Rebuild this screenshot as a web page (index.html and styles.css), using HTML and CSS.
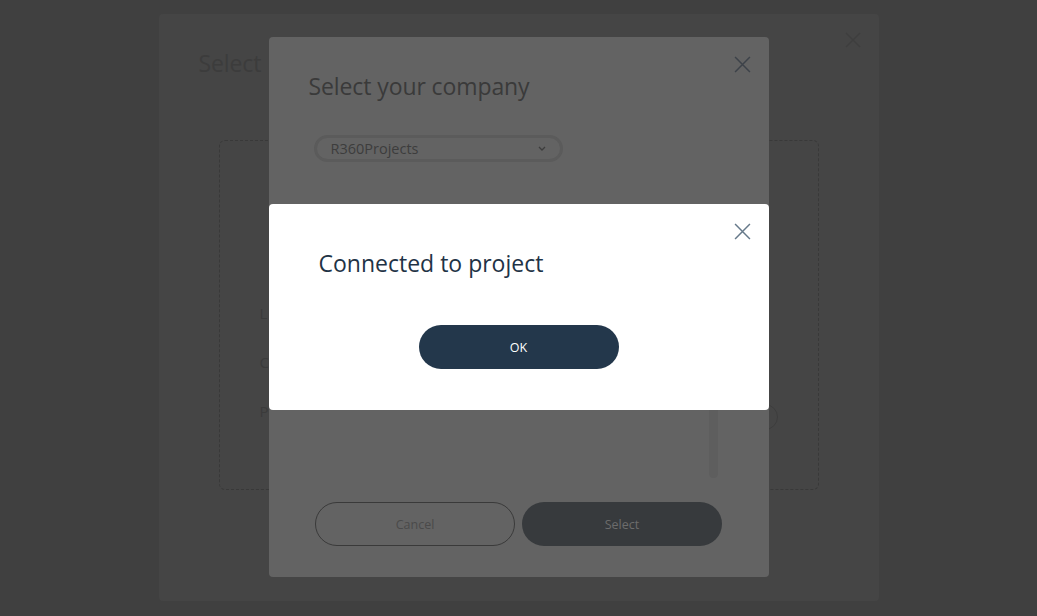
FILE: index.html
```html
<!DOCTYPE html>
<html lang="en">
<head>
  <meta charset="UTF-8" />
  <meta name="viewport" content="width=device-width, initial-scale=1.0"/>
  <title>Connected to project</title>
  <link rel="stylesheet" href="styles.css">
</head>
<body>

  <!-- first dialog, dimmed twice -->
  <div class="layer outer-layer">
    <div class="modal outer">
      <button class="close close-outer" aria-label="Close">
        <svg viewBox="0 0 16 16" width="16" height="16"><path d="M1 1L15 15M15 1L1 15"/></svg>
      </button>
      <h2 class="title">Select</h2>
      <div class="drop-box">
        <div class="rows">
          <p class="row">L</p>
          <p class="row">C</p>
          <p class="row">P</p>
        </div>
        <span class="ring"></span>
      </div>
    </div>
  </div>

  <!-- company dialog, dimmed once -->
  <div class="layer middle-layer">
    <div class="modal middle">
      <button class="close close-middle" aria-label="Close">
        <svg viewBox="0 0 16 16" width="17" height="17"><path d="M1 1L15 15M15 1L1 15"/></svg>
      </button>
      <h2 class="title">Select your company</h2>
      <div class="picker">
        <span>R360Projects</span>
        <svg class="chev" viewBox="0 0 8 5" width="8" height="5"><path d="M1 1L4 4L7 1"/></svg>
      </div>
      <div class="list">
        <div class="list-items"></div>
        <div class="track"></div>
      </div>
      <div class="actions">
        <button class="btn btn-outline">Cancel</button>
        <button class="btn btn-dark">Select</button>
      </div>
    </div>
  </div>

  <!-- confirmation -->
  <div class="layer alert-layer">
    <div class="modal alert">
      <button class="close close-alert" aria-label="Close">
        <svg viewBox="0 0 16 16" width="17" height="17"><path d="M1 1L15 15M15 1L1 15"/></svg>
      </button>
      <h2 class="alert-title">Connected to project</h2>
      <div class="alert-actions">
        <button class="btn btn-ok">OK</button>
      </div>
    </div>
  </div>

</body>
</html>
```

FILE: styles.css
```css
html, body {
  margin: 0;
  height: 100%;
}
body {
  background: #404040;
  font-family: "Open Sans", "Noto Sans", sans-serif;
  overflow: hidden;
}
.layer {
  position: fixed;
  inset: 0;
  display: flex;
  justify-content: center;
  align-items: flex-start;
}
.outer-layer {
  padding-top: 14px;
}
.middle-layer {
  padding-top: 37px;
}
.alert-layer {
  padding-top: 204px;
}
.modal {
  position: relative;
  box-sizing: border-box;
  border-radius: 4px;
}
.close {
  position: absolute;
  background: none;
  border: 0;
  padding: 0;
  line-height: 0;
}
.close svg path {
  fill: none;
  stroke-width: 1.4;
}
h2, p {
  margin: 0;
  font-weight: normal;
}
.title {
  font-size: 23px;
  line-height: 32px;
  letter-spacing: -0.1px;
}

/* outer */
.outer {
  width: 720px;
  height: 587px;
  background: #454545;
  padding: 33px 40px;
  color: #3c3c3c;
}
.close-outer {
  top: 18px;
  right: 18px;
}
.close-outer path {
  stroke: #3e3e3e;
}
.drop-box {
  margin: 61px 0 0 20px;
  width: 600px;
  height: 350px;
  box-sizing: border-box;
  border: 1px dashed #393939;
  border-radius: 6px;
  padding: 162px 0 0 40px;
  position: relative;
}
.rows .row {
  font-size: 15px;
  line-height: 20px;
  margin-bottom: 29px;
  color: #3b3b3b;
}
.ring {
  position: absolute;
  right: 40px;
  top: 263px;
  width: 24px;
  height: 24px;
  border: 1px solid #3d3d3d;
  border-radius: 50%;
}

/* middle */
.middle {
  width: 500px;
  height: 540px;
  background: #636363;
  padding: 33px 0 31px 40px;
  display: flex;
  flex-direction: column;
  color: #3a3a3a;
}
.close-middle {
  top: 19px;
  right: 18px;
}
.close-middle path {
  stroke: #3d4249;
}
.picker {
  margin: 33px 0 0 5px;
  width: 249px;
  height: 27px;
  box-sizing: border-box;
  border: 3px solid #5b5b5b;
  border-radius: 14px;
  display: flex;
  align-items: center;
  justify-content: space-between;
  padding: 0 14px 0 14px;
  font-size: 14.5px;
  color: #3d3d3d;
}
.chev path {
  fill: none;
  stroke: #3d3d3d;
  stroke-width: 1.3;
}
.list {
  display: flex;
  margin-top: 48px;
  height: 268px;
  padding-right: 51px;
}
.list-items {
  flex: 1;
}
.track {
  width: 9px;
  border-radius: 5px;
  background: #5e5e5e;
}
.actions {
  margin-top: auto;
  margin-left: -40px;
  display: flex;
  justify-content: center;
  gap: 7px;
}
.btn {
  width: 200px;
  height: 44px;
  border-radius: 22px;
  font-family: "Open Sans", "Noto Sans", sans-serif;
  font-size: 12.5px;
  cursor: pointer;
}
.btn-outline {
  background: transparent;
  border: 1px solid #3a3a3a;
  color: #4a4a4a;
}
.btn-dark {
  background: #373a3d;
  border: 0;
  color: #6c6c6c;
}

/* alert */
.alert {
  width: 500px;
  height: 206px;
  background: #fff;
  padding: 43px 50px 0;
}
.close-alert {
  top: 19px;
  right: 18px;
}
.close-alert path {
  stroke: #66798a;
}
.alert-title {
  font-size: 23px;
  line-height: 32px;
  color: #1f3346;
  letter-spacing: 0;
}
.alert-actions {
  display: flex;
  justify-content: center;
  margin: 46px -50px 0;
}
.btn-ok {
  background: #23374b;
  border: 0;
  color: #fff;
  font-weight: 500;
}
```
